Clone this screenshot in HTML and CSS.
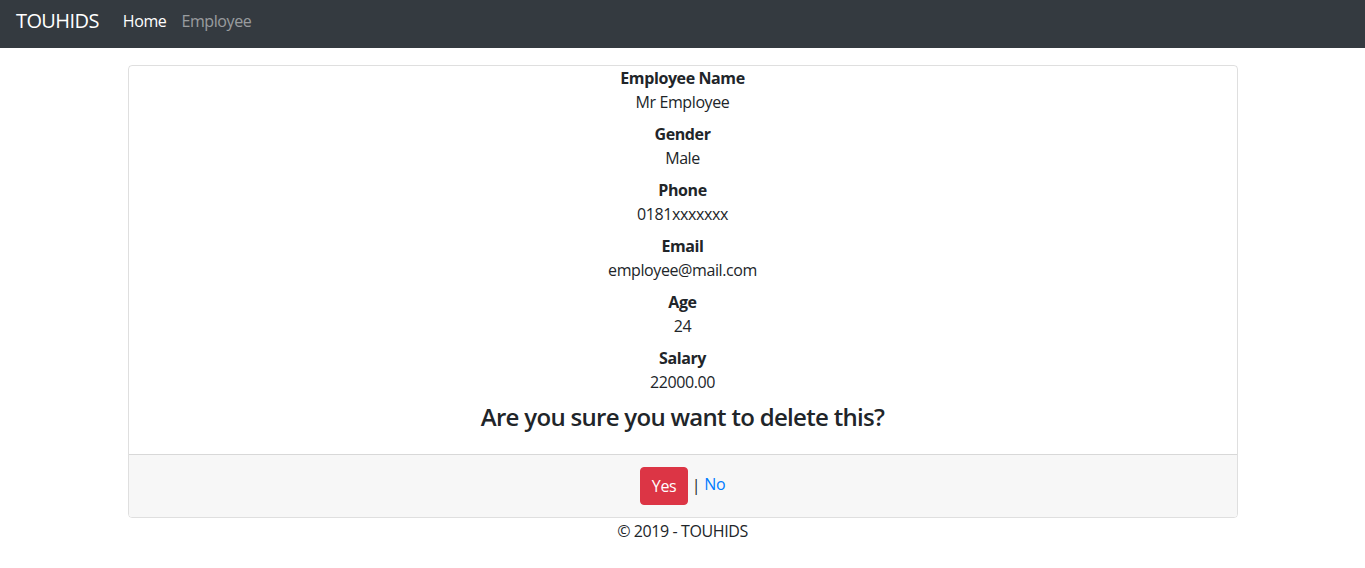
FILE: index.html
```html
<!DOCTYPE html>
<html>
<head>
<meta charset="utf-8">
<link rel="stylesheet" href="styles.css">
</head>
<body>
<nav class="navbar">
  <a class="brand" href="#">TOUHIDS</a>
  <a class="nav-link active" href="#">Home</a>
  <a class="nav-link" href="#">Employee</a>
</nav>
<main class="container">
  <div class="card">
    <div class="card-body">
      <dl class="details">
        <dt>Employee Name</dt><dd>Mr Employee</dd>
        <dt>Gender</dt><dd>Male</dd>
        <dt>Phone</dt><dd>0181xxxxxxx</dd>
        <dt>Email</dt><dd>employee@mail.com</dd>
        <dt>Age</dt><dd>24</dd>
        <dt>Salary</dt><dd>22000.00</dd>
      </dl>
      <h3 class="question">Are you sure you want to delete this?</h3>
    </div>
    <div class="card-footer">
      <button class="btn-yes" type="button">Yes</button>
      <span class="sep">|</span>
      <a class="link-no" href="#">No</a>
    </div>
  </div>
  <footer class="footer">© 2019 - TOUHIDS</footer>
</main>
</body>
</html>
```
FILE: styles.css
```css
* { box-sizing: border-box; }
html, body { margin: 0; }
body {
  font-family: "Open Sans", "Noto Sans", sans-serif;
  font-size: 16px;
  line-height: 24px;
  letter-spacing: -0.4px;
  color: #212529;
  background: #fff;
}
.navbar {
  height: 48px;
  background: #343a40;
  display: flex;
  align-items: center;
  padding: 0 16px 6px;
}
.brand {
  color: #fff;
  font-size: 20px;
  letter-spacing: -0.6px;
  text-decoration: none;
  margin-right: 24px;
}
.nav-link {
  color: rgba(255,255,255,.5);
  text-decoration: none;
  font-size: 16px;
  margin-right: 15px;
}
.nav-link.active { color: #fff; }
.container {
  width: 1110px;
  margin: 17px auto 0;
}
.card {
  border: 1px solid rgba(0,0,0,.125);
  border-radius: 4px;
  overflow: hidden;
}
.card-body {
  text-align: center;
  padding: 0 0 23px;
}
.details { margin: 0; }
.details dt { font-weight: 700; }
.details dd { margin: 0 0 8px; }
.question {
  margin: 0;
  font-size: 24px;
  line-height: 29px;
  font-weight: 600;
  letter-spacing: -0.7px;
}
.card-footer {
  background: #f7f7f7;
  border-top: 1px solid rgba(0,0,0,.125);
  padding: 12px 20px;
  display: flex;
  justify-content: center;
  align-items: center;
  gap: 4px;
}
.btn-yes {
  background: #dc3545;
  border: 1px solid #dc3545;
  color: #fff;
  font-family: inherit;
  font-size: 16px;
  letter-spacing: -0.4px;
  line-height: 24px;
  padding: 6px 11px;
  border-radius: 4px;
  height: 38px;
  width: 48px;
}
.sep { color: #212529; position: relative; top: -1px; }
.link-no { color: #007bff; text-decoration: none; position: relative; top: -2px; }
.footer {
  text-align: center;
  padding-top: 1px;
}
```
